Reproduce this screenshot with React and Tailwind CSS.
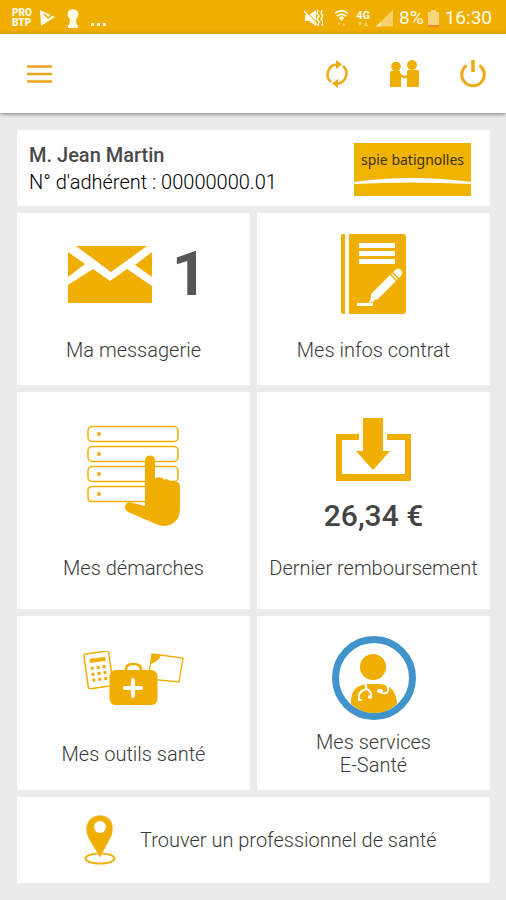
import clsx from "clsx";

// --- ICONS ---
const MessageIcon = () => (
  <svg width="84" height="57" viewBox="0 0 84 57" fill="#f0ae00" aria-hidden="true">
    <path d="M8 0H79L43 26Z" />
    <path d="M0 6L17 18L0 31Z" />
    <path d="M84 6V31L67 19Z" />
    <path d="M0 39L25 23L42 35L59 23L84 40V57H0Z" />
  </svg>
);

const ContractIcon = () => (
  <svg width="65" height="80" viewBox="0 0 65 80" fill="#f0ae00" aria-hidden="true">
    <path d="M2 0H4V80H2Q0 80 0 78V2Q0 0 2 0Z" />
    <path d="M8 0H62Q65 0 65 3V77Q65 80 62 80H8Z" />
    <g fill="#fff">
      <path d="M18 9H54V14H18ZM18 17H54V22H18ZM18 25H54V30H18Z" />
      <path d="M16 69H32V72H16Z" />
      <path d="M30 60L49 41L55 47L36 66L30 65Z" />
      <path d="M30 63L34 67L28 69Z" />
      <path d="M50 40L51 39L57 45L56 46Z" />
      <path d="M53 37Q57 33 60 36Q63 39 59 43L58 44L52 38Z" />
    </g>
  </svg>
);

const FormsIcon = () => (
  <svg width="94" height="102" viewBox="0 0 94 102" aria-hidden="true">
    <g fill="none" stroke="#f0ae00" strokeWidth="1.5">
      <rect x="1" y="1.5" width="90" height="15" rx="4" />
      <rect x="1" y="21.5" width="90" height="15" rx="4" />
      <rect x="1" y="41.5" width="90" height="15" rx="4" />
      <path d="M63 61.500H5Q1 61.500 1 65.500V72.500Q1 76.500 5 76.500H60" />
    </g>
    <g fill="#f0ae00">
      <circle cx="12" cy="9" r="2" />
      <circle cx="12" cy="29" r="2" />
      <circle cx="12" cy="49" r="2" />
      <circle cx="12" cy="69" r="2" />
    </g>
    <path
      d="M58 36Q58 30.500 63 30.500Q68 30.500 68 36V53Q75 51 77 55Q80 52 84 57Q93 55 93 62V84Q93 94 85 99Q77 103 69 99L41 87Q36 83 39 79Q41 76 46 78L58 81Z"
      fill="#f0ae00"
    />
  </svg>
);

const RefundIcon = () => (
  <svg width="75" height="63" viewBox="0 0 75 63" fill="#f0ae00" aria-hidden="true">
    <path d="M0 16H23V22H6V56H69V22H51V16H75V63H0Z" />
    <path d="M27 0H47V33H54L37 52L20 33H27Z" />
  </svg>
);

const HealthToolsIcon = () => (
  <svg width="101" height="54" viewBox="0 0 101 54" aria-hidden="true">
    <g transform="rotate(-8 15 19)">
      <rect x="3" y="1.500" width="25" height="35" rx="2" fill="#fff" stroke="#f0ae00" strokeWidth="1.500" />
      <g fill="#f0ae00">
        <rect x="8" y="7" width="16" height="4" />
        <rect x="8" y="15" width="3" height="3" />
        <rect x="14" y="15" width="3" height="3" />
        <rect x="20" y="15" width="3" height="3" />
        <rect x="8" y="21" width="3" height="3" />
        <rect x="14" y="21" width="3" height="3" />
        <rect x="20" y="21" width="3" height="3" />
        <rect x="8" y="27" width="3" height="3" />
        <rect x="14" y="27" width="3" height="3" />
        <rect x="20" y="27" width="3" height="3" />
      </g>
    </g>
    <path d="M69 3L100 7L96 31L65 28Z" fill="#fff" stroke="#f0ae00" strokeWidth="1.300" />
    <path d="M69 3L78 4Q76 10 68 13Z" fill="#f0ae00" />
    <path d="M43 20Q42 13 50 13Q59 13 58 20" fill="none" stroke="#f0ae00" strokeWidth="2.500" />
    <rect x="26.500" y="19" width="48" height="35" rx="6" fill="#f0ae00" />
    <path d="M50 29V45M42 37H58" stroke="#fff" strokeWidth="4" strokeLinecap="round" />
  </svg>
);

const DoctorIcon = () => (
  <svg width="84" height="84" viewBox="0 0 84 84" aria-hidden="true">
    <circle cx="42" cy="42" r="38.500" fill="#fff" stroke="#4194cb" strokeWidth="7" />
    <circle cx="41" cy="31" r="13" fill="#f0ae00" />
    <path d="M19 68Q18 49 36 48H47Q64 49 65 68Q55 77 42 77Q29 77 19 68Z" fill="#f0ae00" />
    <g fill="none" stroke="#fff" strokeWidth="2" strokeLinecap="round">
      <path d="M33 48Q35 51 34 53Q28 55 27 59L27 64H29M34 53Q40 55 39 60" />
      <path d="M55 49Q58 55 54 57Q51 58 48 56" />
    </g>
    <circle cx="38" cy="61" r="2" fill="#fff" />
    <ellipse cx="48" cy="55" rx="3" ry="2" fill="#fff" />
  </svg>
);

const PinIcon = () => (
  <svg width="32" height="50" viewBox="0 0 32 50" className="shrink-0" aria-hidden="true">
    <ellipse cx="16" cy="43.500" rx="14.500" ry="5" fill="#fff" stroke="#f0ae00" strokeWidth="1.800" />
    <path
      d="M16 0Q29 1 29 14Q29 20 25 26L16 43L6 26Q2 20 2 14Q3 1 16 0Z"
      fill="#f0ae00"
      stroke="#fff"
      strokeWidth="0.500"
    />
    <circle cx="16" cy="12" r="6" fill="#fff" />
  </svg>
);

const MenuIcon = () => (
  <svg width="27" height="20" viewBox="0 0 27 20" aria-hidden="true">
    <path d="M2 2.500H25M2 10H25M2 17.500H25" stroke="#e9a420" strokeWidth="2.500" strokeLinecap="round" />
  </svg>
);

const RefreshIcon = () => (
  <svg width="28" height="28" viewBox="0 0 28 28" aria-hidden="true">
    <g fill="none" stroke="#ecaa10" strokeWidth="2.500">
      <path d="M8 22A10 10 0 0 1 15 4.500" />
      <path d="M20 6A10 10 0 0 1 13 23.500" />
    </g>
    <path d="M13 0L19 4.500L13 9Z" fill="#ecaa10" />
    <path d="M15 19L9 23.500L15 28Z" fill="#ecaa10" />
  </svg>
);

const PeopleIcon = () => (
  <svg width="30" height="28" viewBox="0 0 30 28" fill="#f0ae00" aria-hidden="true">
    <circle cx="6" cy="6.500" r="4.800" />
    <circle cx="22" cy="5" r="5" />
    <path d="M1 11H10V13L15 16.500L14 18L11 17V27H0V12Z" />
    <path d="M18 10H28L29 11V27H17V18L14 18.500L13.500 16.500L17 15V11Z" />
  </svg>
);

const PowerIcon = () => (
  <svg width="28" height="28" viewBox="0 0 28 28" fill="none" stroke="#ecaa10" strokeWidth="3" aria-hidden="true">
    <path d="M7.500 5.500A11.200 11.200 0 1 0 20.500 5.500" />
    <path d="M14 0V12" strokeWidth="3.500" />
  </svg>
);

// --- SUB-COMPONENTS ---
const StatusBar = () => (
  <div className="flex h-[34px] items-center justify-between bg-[#f0ae00] pl-3 pr-[14px] pt-[2px] text-[#fffbe9]">
    <div className="flex items-center gap-3">
      <span className="text-[10px] font-black leading-[10px]">
        PRO
        <br />
        BTP
      </span>
      <svg width="15" height="16" viewBox="0 0 15 16" className="-ml-1" aria-hidden="true">
        <path d="M0 0L15 7L1 16Z" fill="currentColor" />
        <path d="M4 4L8 8L14 3" fill="none" stroke="#f0ae00" strokeWidth="1.500" />
      </svg>
      <svg width="12" height="19" viewBox="0 0 12 19" fill="currentColor" aria-hidden="true">
        <circle cx="6" cy="5.500" r="5.500" />
        <path d="M3.500 9H8.500L10 16H11V19H1V16H2Z" />
      </svg>
      <svg width="15" height="19" viewBox="0 0 15 19" fill="currentColor" aria-hidden="true">
        <path d="M0 14H3V17H0ZM6 14H9V17H6ZM12 14H15V17H12Z" />
      </svg>
    </div>
    <div className="flex items-center gap-[6px]">
      <svg width="19" height="18" viewBox="0 0 19 18" className="mr-[6px]" aria-hidden="true">
        <path d="M1 6H5L12 1V17L5 12H1Z" fill="currentColor" />
        <path d="M1 1L14 15" stroke="#f0ae00" strokeWidth="1" />
        <path d="M0 2L13 16" stroke="currentColor" strokeWidth="1.500" />
        <path d="M14 1L13 4L15 7L13 10L15 13L14 17M18 1L17 4L19 7L17 10L19 13L18 17" fill="none" stroke="currentColor" strokeWidth="1.500" />
      </svg>
      <svg width="13" height="18" viewBox="0 0 14 18" className="mr-[2px]" aria-hidden="true">
        <path d="M0 4Q7 -2 14 4M2 7Q7 3 12 7" fill="none" stroke="currentColor" strokeWidth="1.800" />
        <path d="M4 9Q7 6 10 9L7 12Z" fill="currentColor" />
        <path d="M3 14H6L4.500 17ZM8 17H11L9.500 14Z" fill="currentColor" opacity="0.500" />
      </svg>
      <span className="flex flex-col items-center text-[11px] font-bold leading-[12px]">
        4G
        <svg width="10" height="4" viewBox="0 0 10 4" fill="currentColor" opacity="0.500" aria-hidden="true">
          <path d="M0 0H4L2 4ZM6 4H10L8 0Z" />
        </svg>
      </span>
      <svg width="17" height="18" viewBox="0 0 18 18" fill="currentColor" aria-hidden="true">
        <path d="M0 18L18 0V18Z" opacity="0.450" />
        <path d="M0 18L5 13V18Z" opacity="0.600" />
      </svg>
      <span className="text-[19px] leading-6">8%</span>
      <svg width="11" height="17" viewBox="0 0 11 17" className="-ml-[2px]" aria-hidden="true">
        <path d="M3 0H8V2H11V15H0V2H3Z" fill="#f8d77a" />
        <path d="M0 15H11V17H0Z" fill="#f08a2a" />
      </svg>
      <span className="text-[19px] leading-6">16:30</span>
    </div>
  </div>
);

const Header = () => (
  <header className="relative flex h-[79px] items-center justify-between bg-white pl-[26px] pr-[19px] shadow-[0_1px_4px_rgba(0,0,0,0.5)]">
    <button type="button" aria-label="Menu">
      <MenuIcon />
    </button>
    <div className="flex gap-[39px]">
      <button type="button" aria-label="Actualiser">
        <RefreshIcon />
      </button>
      <button type="button" aria-label="Mes bénéficiaires">
        <PeopleIcon />
      </button>
      <button type="button" aria-label="Déconnexion">
        <PowerIcon />
      </button>
    </div>
  </header>
);

const CompanyLogo = () => (
  <div className="flex h-[53px] w-[117px] shrink-0 flex-col items-center justify-between bg-[#f0b400] pb-[12px] pt-[7px]">
    <span className="whitespace-nowrap font-['Noto_Sans',sans-serif] text-[14px] leading-[20px] text-[#3d2f0a]">
      spie batignolles
    </span>
    <svg width="117" height="6" viewBox="0 0 117 6" aria-hidden="true">
      <path d="M0 4Q58 -4 117 4V6Q58 3 0 6Z" fill="#fff" />
    </svg>
  </div>
);

const MemberCard = () => (
  <section className="col-span-2 flex items-center justify-between bg-white pb-[10px] pl-3 pr-[19px] pt-3">
    <div className="text-[20px] leading-[27px]">
      <p className="font-medium text-[#4a4a4a]">M. Jean Martin</p>
      <p className="font-light text-black">N° d'adhérent : 00000000.01</p>
    </div>
    <CompanyLogo />
  </section>
);

const Tile = ({ label, className, children }) => (
  <a href="#" className={clsx("flex flex-col items-center justify-between bg-white text-center", className)}>
    {children}
    <span className="text-[20px] font-light leading-6">{label}</span>
  </a>
);

// --- MAIN COMPONENT ---
export default function App() {
  return (
    <div className="flex min-h-screen flex-col bg-[#ebebeb] font-['Roboto',sans-serif] text-[#3a3a3a]">
      <StatusBar />
      <Header />

      <main className="grid grid-cols-2 gap-[7px] py-[17px] pl-[17px] pr-4">
        <MemberCard />

        <Tile label="Ma messagerie" className="pb-[23px] pt-[21px]">
          <div className="flex h-20 items-center gap-5 pl-2">
            <MessageIcon />
            <span className="text-[62px] font-bold leading-none text-[#555]">1</span>
          </div>
        </Tile>
        <Tile label="Mes infos contrat" className="gap-6 pb-[23px] pt-[21px]">
          <ContractIcon />
        </Tile>

        <Tile label="Mes démarches" className="pb-[29px] pt-[33px]">
          <FormsIcon />
        </Tile>
        <Tile label="Dernier remboursement" className="gap-[22px] pb-[29px] pt-[26px]">
          <div className="flex flex-col items-center gap-[17px]">
            <RefundIcon />
            <strong className="text-[30px] font-medium leading-9 text-[#444]">26,34 €</strong>
          </div>
        </Tile>

        <Tile label="Mes outils santé" className="pb-6 pt-[35px]">
          <HealthToolsIcon />
        </Tile>
        <a href="#" className="flex flex-col items-center gap-[11px] bg-white pb-[13px] pt-5 text-center">
          <DoctorIcon />
          <span className="text-[20px] font-light leading-[23px]">
            Mes services
            <br />
            E-Santé
          </span>
        </a>

        <a href="#" className="col-span-2 flex items-center gap-6 bg-white py-[18px] pl-[67px] pr-4">
          <PinIcon />
          <span className="text-[20px] font-light leading-6">Trouver un professionnel de santé</span>
        </a>
      </main>
    </div>
  );
}
